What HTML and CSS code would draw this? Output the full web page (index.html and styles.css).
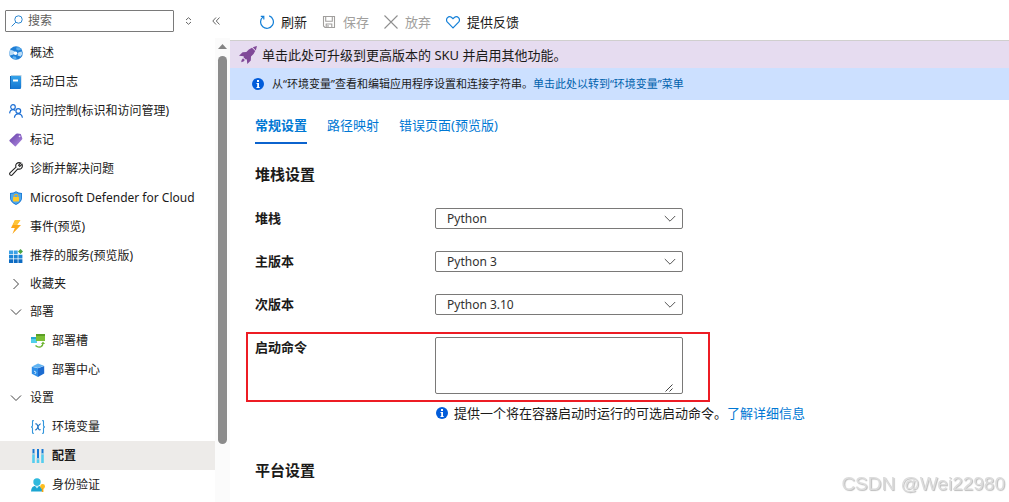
FILE: index.html
```html
<!DOCTYPE html>
<html lang="zh-Hans">
<head>
    <meta charset="UTF-8">
    <meta name="viewport" content="width=device-width, initial-scale=1.0">
    <title>配置</title>
    <link rel="stylesheet" href="styles.css">
</head>
<body>
    <div class="sidebar">
        <div class="search-row">
            <label class="search-box">
                <svg width="12" height="12" viewBox="0 0 12 12" fill="none" stroke="#2a86d1"><circle cx="7.5" cy="4.5" r="3.7"/><path d="M4.8 7.2L.6 11.4"/></svg>
                <input type="text" placeholder="搜索" aria-label="搜索">
            </label>
            <button class="icon-btn sort-btn" aria-label="排序">
                <svg width="7" height="8" viewBox="0 0 7 8" fill="none" stroke="#666"><path d="M1 3L3.5 .7L6 3M1 5L3.5 7.3L6 5"/></svg>
            </button>
            <button class="icon-btn" aria-label="折叠">
                <svg width="8" height="8" viewBox="0 0 8 8" fill="none" stroke="#666"><path d="M4 .5L.8 4L4 7.5M7.5 .5L4.3 4L7.5 7.5"/></svg>
            </button>
        </div>

        <div class="nav-wrap">
            <ul class="nav">
                <li><a href="#">
                    <svg viewBox="0 0 14 14"><circle cx="7" cy="7" r="6.8" fill="#1f7fd6"/><path d="M1 4.2Q3 3.6 5.8 5.6L4.6 8.4L1 9.5Q-.4 7 1 4.2zM9.2 6.4L12.6 5.6L13.4 8L11.6 10.6L8.6 9.4z" fill="#b9dcf7"/><path d="M7.4 1.4L10.3 1.2L12.4 3.2L9.6 4.6L7.2 3.4zM4.2 10.2L7 10.8L7.6 13.2Q5 13.4 3.4 12z" fill="#5fb0ee"/><circle cx="6.5" cy="7.3" r="1.8" fill="#fff"/></svg>
                    <span>概述</span></a></li>
                <li><a href="#">
                    <svg viewBox="0 0 14 14"><defs><linearGradient id="book" x2="0" y2="1"><stop stop-color="#35a3ea"/><stop offset="1" stop-color="#1474d0"/></linearGradient></defs><path d="M2 0H12.5V12.5H2z" fill="#b5cfe2"/><rect x="1" y="1" width="11" height="13" rx="1" fill="url(#book)"/><path d="M1.5 1V14" stroke="#1165b8"/><path d="M4 5.5H9" stroke="#fff" stroke-width="2"/></svg>
                    <span>活动日志</span></a></li>
                <li><a href="#">
                    <svg viewBox="0 0 14 14" fill="none" stroke="#1c6fd4" stroke-width="1.2"><circle cx="4" cy="3" r="2.3"/><path d="M.6 9.4Q1 5.6 4 5.6Q5.3 5.6 6.2 6.5"/><circle cx="9.3" cy="7" r="2.4"/><path d="M5.4 13.8Q5.8 9.8 9.3 9.8Q13 9.8 13.4 13.8"/></svg>
                    <span>访问控制(标识和访问管理)</span></a></li>
                <li><a href="#">
                    <svg viewBox="0 0 14 14"><defs><linearGradient id="tag" x2="1" y2="1"><stop stop-color="#6540a8"/><stop offset="1" stop-color="#b18be0"/></linearGradient></defs><path d="M.6 7L7.2 .8Q7.8 .4 8.6 .5L11.8 1L13.3 5.2Q13.5 6 13 6.6L6.8 13.2Q6.2 13.7 5.6 13.1L.6 8.2Q.1 7.6 .6 7z" fill="url(#tag)"/><circle cx="10.6" cy="3.3" r=".9" fill="#eee1fa"/></svg>
                    <span>标记</span></a></li>
                <li><a href="#">
                    <svg viewBox="0 0 14 14" fill="none" stroke="#222" stroke-width="1.1"><path d="M11.8 1L9.6 3.2L10.8 4.4L13 2.2Q14 4.8 12.3 6.4Q10.8 7.6 8.8 6.9L3.3 12.9Q2.3 13.9 1.1 12.9Q.1 11.8 1.2 10.7L7 5.2Q6.2 3.2 7.6 1.7Q9.3 .1 11.8 1z"/></svg>
                    <span>诊断并解决问题</span></a></li>
                <li><a href="#">
                    <svg viewBox="0 0 14 14"><path d="M7 .2Q9 2 13 2V7Q13 11.2 7 14Q1 11.2 1 7V2Q5 2 7 .2z" fill="#1a78d2"/><path d="M7 1.2Q9 2.7 12.2 2.8V7Q12 10.5 7 13Q2 10.5 1.8 7V2.8Q5 2.7 7 1.2z" fill="#4fa9ee"/><path d="M5.1 6.5V5Q5.1 3.3 7 3.3Q8.9 3.3 8.9 5V6.5" fill="none" stroke="#f2b21b"/><rect x="4" y="6" width="6" height="4.4" rx=".6" fill="#ffc928"/></svg>
                    <span>Microsoft Defender for Cloud</span></a></li>
                <li><a href="#">
                    <svg viewBox="0 0 14 14"><path d="M6 0H11.4L8 5H12L3.4 14L5.8 8H2z" fill="#fba819"/><path d="M6 0H11.4L8 5H4z" fill="#ffc63a"/></svg>
                    <span>事件(预览)</span></a></li>
                <li><a href="#">
                    <svg viewBox="0 0 14 14"><path d="M0 1.5H4V5H0zM4.7 1.5H8.7V5H4.7z" fill="#3ba1e5"/><path d="M0 5.7H4V9.5H0zM4.7 5.7H8.7V9.5H4.7zM9.4 5.7H13.4V9.5H9.4z" fill="#1c85d6"/><path d="M0 10.2H4V14H0zM4.7 10.2H8.7V14H4.7zM9.4 10.2H13.4V14H9.4z" fill="#0c6bc2"/><path d="M11.5 0L14 2.5L11.5 5L9 2.5z" fill="#4da443"/></svg>
                    <span>推荐的服务(预览版)</span></a></li>
                <li class="group"><a href="#">
                    <svg viewBox="0 0 14 14" fill="none" stroke="#444"><path d="M4.5 2L9.5 7L4.5 12"/></svg>
                    <span>收藏夹</span></a></li>
                <li class="group"><a href="#">
                    <svg viewBox="0 0 14 14" fill="none" stroke="#444"><path d="M2 4.5L7 9.5L12 4.5"/></svg>
                    <span>部署</span></a></li>
                <li class="sub"><a href="#">
                    <svg viewBox="0 0 14 14"><rect x="0" y="3" width="6" height="6" fill="#50cfea"/><path d="M0 3H6V5H0z" fill="#26a7cf"/><rect x="5" y="0" width="9" height="7" fill="#7bbf35"/><path d="M5 0H14V2H5z" fill="#5b9f25"/><path d="M4.5 11.5Q7 14 10 12.6Q12 11.5 12 9" fill="none" stroke="#6fb536" stroke-width="1.4"/><path d="M10 10L12 7.6L14 10z" fill="#6fb536"/></svg>
                    <span>部署槽</span></a></li>
                <li class="sub"><a href="#">
                    <svg viewBox="0 0 14 14"><path d="M1 3.6L7 .4L13 2.8L7 5z" fill="#62b4f2"/><path d="M.8 3.8L7 5.2V14L.8 10.8z" fill="#2f8fe8"/><path d="M7 5.2L13.2 3V10.6L7 14z" fill="#1c6cd0"/><path d="M3 8L5 9.3L3.8 11" stroke="#d8efff" fill="none"/></svg>
                    <span>部署中心</span></a></li>
                <li class="group"><a href="#">
                    <svg viewBox="0 0 14 14" fill="none" stroke="#444"><path d="M2 4.5L7 9.5L12 4.5"/></svg>
                    <span>设置</span></a></li>
                <li class="sub"><a href="#">
                    <svg viewBox="0 0 14 14" fill="none" stroke="#3195dc" stroke-width="1.1"><path d="M2.8 .6H2Q1.5 .6 1.5 1.5V6L.5 7L1.5 8V12.5Q1.5 13.4 2 13.4H2.8M11.2 .6H12Q12.5 .6 12.5 1.5V6L13.5 7L12.5 8V12.5Q12.5 13.4 12 13.4H11.2"/><path d="M4.3 4Q5.8 3.4 6.5 5.5L7.6 8.8Q8.2 10.5 9.6 9.5M9.8 4Q8.5 3.5 7 6.8Q5.5 10.6 4.1 9.6" stroke="#1c73c4"/></svg>
                    <span>环境变量</span></a></li>
                <li class="sub selected"><a href="#">
                    <svg viewBox="0 0 14 14"><path d="M2.5 0V4M7 0V9M11.5 0V4" stroke="#1477d4" stroke-width="2"/><path d="M2.5 6V14M7 11V14M11.5 6V14" stroke="#54cdee" stroke-width="2.6"/><path d="M1.2 5H3.8M5.7 10H8.3M10.2 5H12.8" stroke="#2aa6de"/></svg>
                    <span>配置</span></a></li>
                <li class="sub"><a href="#">
                    <svg viewBox="0 0 14 14"><path d="M0 13.5Q0 7.5 6 7.5Q11 7.5 11.5 13.5z" fill="#1ba5d1"/><circle cx="6" cy="4" r="3.7" fill="#2fb9dd"/><path d="M4 8L6 10.5L8 8z" fill="#c9f0fa"/><circle cx="11.6" cy="8.5" r="2.4" fill="#fdbd1d"/><path d="M11.6 10V14" stroke="#f4a814" stroke-width="1.6"/></svg>
                    <span>身份验证</span></a></li>
            </ul>
            <div class="scrollbar">
                <svg width="9" height="5" viewBox="0 0 9 5"><path d="M0 5L4.5 0L9 5z" fill="#858585"/></svg>
                <div class="thumb"></div>
            </div>
        </div>
    </div>

    <div class="main">
        <div class="toolbar">
            <button>
                <svg width="14" height="14" viewBox="0 0 14 14" fill="none" stroke="#1580d8" stroke-width="1.2"><path d="M9.2 .9A6.4 6.4 0 1 1 3 1.9M.8 1.3H3.8V4.4"/></svg>
                刷新
            </button>
            <button disabled>
                <svg width="14" height="14" viewBox="0 0 14 14" fill="none" stroke="#a19f9d" stroke-width="1.1"><path d="M1.5 1.5H12.5V12.5H3L1.5 11zM3.7 1.5V6.3H10.3V1.5M4.2 12.5V9H9.8V12.5M6 10V12"/></svg>
                保存
            </button>
            <button disabled>
                <svg width="14" height="14" viewBox="0 0 14 14" fill="none" stroke="#8f8f8f" stroke-width="1.1"><path d="M.5 .5L13.5 13.5M13.5 .5L.5 13.5"/></svg>
                放弃
            </button>
            <button>
                <svg width="14" height="14" viewBox="0 0 14 14" fill="none" stroke="#1580d8" stroke-width="1.2"><path d="M7 12.8L1.4 7.1Q-.3 5 1.3 2.9Q3.2 .9 5.4 2.2L7 3.7L8.6 2.2Q10.8 .9 12.7 2.9Q14.3 5 12.6 7.1z"/></svg>
                提供反馈
            </button>
        </div>

        <div class="banner upgrade">
            <svg width="18" height="18" viewBox="0 0 18 18" fill="#804998"><path d="M18 0L16.8 4.4L13.8 1.2zM13 1.8L16.2 5Q15 8.2 12 10.5L11.8 14.4L8.3 18L7.8 13.2L6.8 13.5L4.5 11.2L4.8 10.2L0 9.8L3.6 6.3L7.3 6Q9.6 3 13 1.8z"/><path d="M4 12.2L5.8 14Q5 16 2.2 16.2Q2.2 13.5 4 12.2z"/></svg>
            <span>单击此处可升级到更高版本的 SKU 并启用其他功能。</span>
        </div>
        <div class="banner info">
            <svg width="12" height="12" viewBox="0 0 12 12"><circle cx="6" cy="6" r="6" fill="#015cda"/><path d="M5 2H7V4H5zM4.5 5H7V9H7.7V10H4.5V9H5.2V6H4.5z" fill="#fff"/></svg>
            <span>从“环境变量”查看和编辑应用程序设置和连接字符串。<a href="#">单击此处以转到“环境变量”菜单</a></span>
        </div>

        <div class="content">
            <div class="tabs">
                <a href="#" class="active">常规设置</a>
                <a href="#">路径映射</a>
                <a href="#">错误页面(预览版)</a>
            </div>

            <h2>堆栈设置</h2>
            <div class="field">
                <label for="stack">堆栈</label>
                <div class="control">
                    <select id="stack"><option>Python</option></select>
                    <svg class="chevron" width="12" height="8" viewBox="0 0 12 8" fill="none" stroke="#555"><path d="M.8 1L6 6.2L11.2 1"/></svg>
                </div>
            </div>
            <div class="field">
                <label for="major">主版本</label>
                <div class="control">
                    <select id="major"><option>Python 3</option></select>
                    <svg class="chevron" width="12" height="8" viewBox="0 0 12 8" fill="none" stroke="#555"><path d="M.8 1L6 6.2L11.2 1"/></svg>
                </div>
            </div>
            <div class="field">
                <label for="minor">次版本</label>
                <div class="control">
                    <select id="minor"><option>Python 3.10</option></select>
                    <svg class="chevron" width="12" height="8" viewBox="0 0 12 8" fill="none" stroke="#555"><path d="M.8 1L6 6.2L11.2 1"/></svg>
                </div>
            </div>
            <div class="field command">
                <label for="command">启动命令</label>
                <div class="control">
                    <textarea id="command"></textarea>
                    <svg class="grip" width="8" height="8" viewBox="0 0 8 8" fill="none" stroke="#444"><path d="M.5 7.5L7.5 .5M4.5 7.5L7.5 4.5"/></svg>
                </div>
                <div class="highlight"></div>
            </div>
            <div class="hint">
                <svg width="12" height="12" viewBox="0 0 12 12"><circle cx="6" cy="6" r="6" fill="#015cda"/><path d="M5 2H7V4H5zM4.5 5H7V9H7.7V10H4.5V9H5.2V6H4.5z" fill="#fff"/></svg>
                <span>提供一个将在容器启动时运行的可选启动命令。<a href="#">了解详细信息</a></span>
            </div>

            <h2>平台设置</h2>
        </div>
    </div>

    <div class="watermark">CSDN @Wei22980</div>
</body>
</html>
```

FILE: styles.css
```css
* {
    box-sizing: border-box;
}

body {
    margin: 0;
    display: flex;
    min-height: 100vh;
    background-color: #fff;
    color: #1b1a19;
    font-family: "Noto Sans", "Noto Sans CJK SC", sans-serif;
    font-size: 13px;
    line-height: 20px;
}

a {
    color: #0078d4;
    text-decoration: none;
}

button {
    border: none;
    padding: 0;
    background: none;
    font: inherit;
    color: inherit;
    cursor: pointer;
}

svg {
    flex: none;
    display: block;
}

/* sidebar */
.sidebar {
    width: 230px;
    flex: none;
    display: flex;
    flex-direction: column;
    font-size: 12px;
}

.search-row {
    display: flex;
    align-items: center;
    height: 38px;
    padding: 4px 10px 0 5px;
}

.search-box {
    display: flex;
    align-items: center;
    gap: 5px;
    flex: 1;
    height: 22px;
    padding: 0 5px;
    border: 1px solid #7a7a7a;
    border-radius: 1px;
}

.search-box input {
    width: 100%;
    min-width: 0;
    border: none;
    outline: none;
    padding: 0;
    background: none;
    font: inherit;
}

.search-box input::placeholder {
    color: #605e5c;
}

.sort-btn {
    margin: 0 20px 0 11px;
}

.nav-wrap {
    display: flex;
    flex: 1;
}

.nav {
    flex: 1;
    list-style: none;
    margin: 0;
    padding: 0;
}

.nav a {
    display: flex;
    align-items: center;
    gap: 7px;
    height: 29px;
    padding-left: 9px;
    color: #1b1a19;
}

.nav svg {
    width: 14px;
    height: 14px;
}

.nav .group a {
    height: 28px;
}

.nav .sub a {
    padding-left: 31px;
}

.nav .selected a {
    background-color: #edebe9;
    font-weight: bold;
}

.scrollbar {
    width: 15px;
    display: flex;
    flex-direction: column;
    align-items: center;
    gap: 7px;
    padding: 6px 0 58px;
    background-color: #fbfbfb;
}

.thumb {
    width: 9px;
    flex: 1;
    border-radius: 5px;
    background-color: #8b8b8b;
}

/* main */
.main {
    flex: 1;
    min-width: 0;
}

.toolbar {
    display: flex;
    align-items: center;
    gap: 15px;
    height: 41px;
    padding: 3px 30px 0;
    border-bottom: 1px solid #d0cfce;
}

.toolbar button {
    display: flex;
    align-items: center;
    gap: 7px;
}

.toolbar button:disabled {
    color: #a19f9d;
    cursor: default;
}

.banner {
    display: flex;
    align-items: center;
}

.upgrade {
    gap: 5px;
    height: 27px;
    padding-left: 9px;
    background-color: #e6dcf0;
}

.info {
    gap: 8px;
    height: 32px;
    padding-left: 22px;
    background-color: #cce0ff;
    font-size: 11px;
}

.info a {
    color: #0062ad;
}

.content {
    padding: 10px 25px 0;
}

.tabs {
    display: flex;
    gap: 20px;
}

.tabs a {
    height: 34px;
    padding-top: 5px;
}

.tabs .active {
    border-bottom: 2px solid #0b63ce;
    font-weight: bold;
}

h2 {
    margin: 20px 0 24px;
    font-size: 15px;
    line-height: 20px;
    font-weight: 600;
}

h2:last-child {
    margin-bottom: 0;
}

.field {
    position: relative;
    display: grid;
    grid-template-columns: 180px minmax(0, 248px);
    margin-bottom: 22px;
}

.field label {
    font-weight: bold;
}

.control {
    position: relative;
}

select,
textarea {
    display: block;
    width: 100%;
    border: 1px solid #7a7978;
    border-radius: 2px;
    background-color: #fff;
    color: #323130;
    font: inherit;
    font-size: 12px;
}

select {
    appearance: none;
    height: 21px;
    padding: 0 11px;
    line-height: 18px;
}

textarea {
    height: 57px;
    resize: none;
}

.chevron {
    position: absolute;
    top: 7px;
    right: 7px;
    pointer-events: none;
}

.grip {
    position: absolute;
    right: 10px;
    bottom: 2px;
}

.command {
    margin-bottom: 9px;
}

/* red frame around the startup command */
.highlight {
    position: absolute;
    top: -5px;
    left: -9px;
    width: 464px;
    height: 70px;
    border: 2px solid #ed1c24;
    pointer-events: none;
}

.hint {
    display: flex;
    align-items: center;
    gap: 6px;
    margin: 0 0 37px 181px;
}

.watermark {
    position: fixed;
    right: 4px;
    bottom: 8px;
    color: #dcdcdc;
    font-family: "Liberation Sans", sans-serif;
    font-size: 19px;
    text-shadow: 1px 1px 1px #bbb;
}
```
